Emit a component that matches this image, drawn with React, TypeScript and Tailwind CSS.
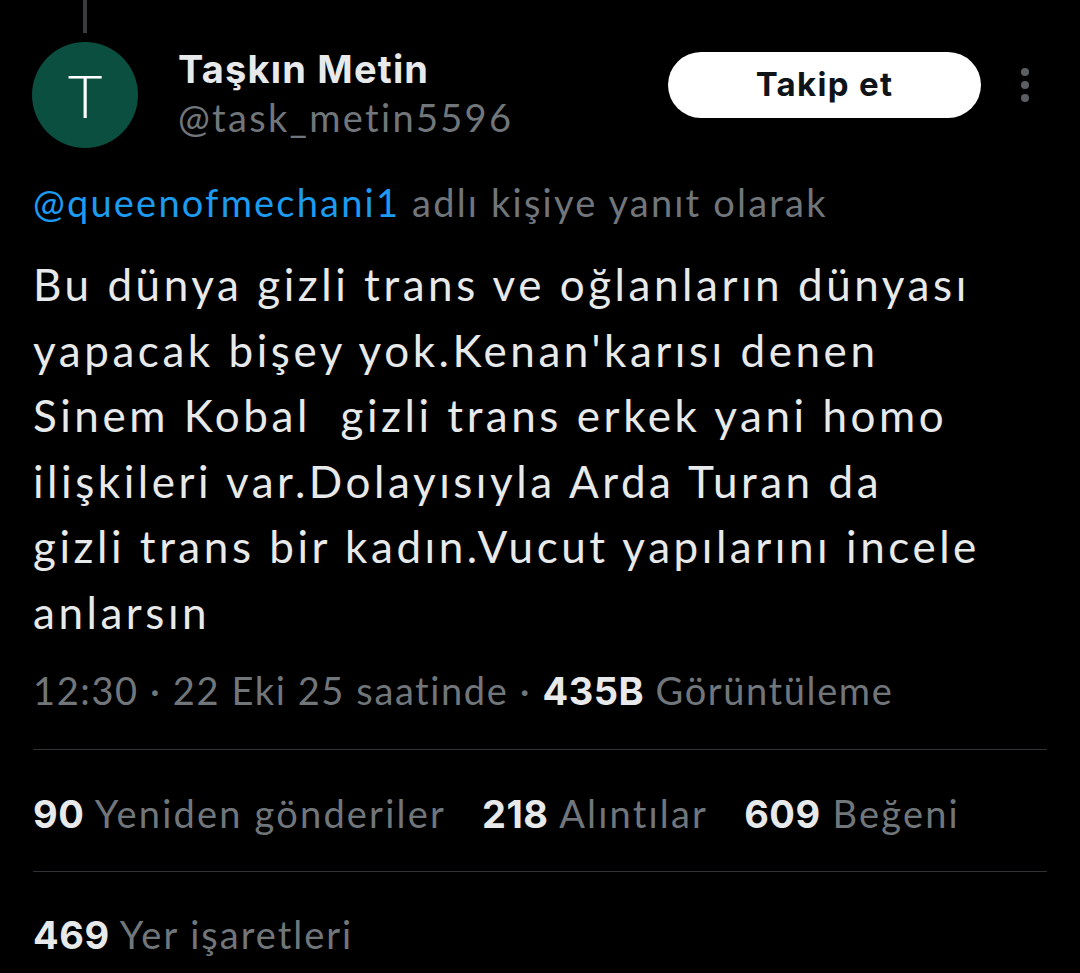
import React from "react";

const lines = [
  "Bu dünya gizli trans ve oğlanların dünyası",
  "yapacak bişey yok.Kenan'karısı denen",
  "Sinem Kobal\u00a0 gizli trans erkek yani homo",
  "ilişkileri var.Dolayısıyla Arda Turan da",
  "gizli trans bir kadın.Vucut yapılarını incele",
  "anlarsın",
];

const num = "font-['Inter',sans-serif] font-bold text-[#e7e9ea] tracking-[0.5px]";

export default function App() {
  return (
    <div className="min-h-[973px] w-[1080px] bg-black text-[#e7e9ea] font-['Lato','Liberation_Sans',sans-serif] overflow-hidden">
      {/* header */}
      <div className="flex items-start pl-[32px] pr-[51px]">
        <div className="flex flex-col items-center w-[106px]">
          <div className="w-[4px] h-[33px] bg-[#3a3d40]" />
          <div className="mt-[9px] w-[106px] h-[106px] rounded-full bg-[#0b4f40] flex items-center justify-center text-white text-[60px] font-light leading-none">
            T
          </div>
        </div>
        <div className="ml-[40px] mt-[43px] flex flex-col">
          <span className="font-['Inter',sans-serif] font-bold text-[38px] leading-[52px] tracking-[1.2px] text-[#e7e9ea]">Taşkın Metin</span>
          <span className="text-[38px] leading-[44px] tracking-[2.3px] text-[#71767b]">@task_metin5596</span>
        </div>
        <div className="ml-auto mt-[52px] flex items-center">
          <button className="w-[313px] h-[66px] rounded-full bg-white text-[#0f1419] font-['Inter',sans-serif] font-bold text-[33px] tracking-[1.3px]">
            Takip et
          </button>
          <div className="ml-[40px] flex flex-col gap-[5px]">
            <span className="w-[8px] h-[8px] rounded-full bg-[#5b5e62]" />
            <span className="w-[8px] h-[8px] rounded-full bg-[#5b5e62]" />
            <span className="w-[8px] h-[8px] rounded-full bg-[#5b5e62]" />
          </div>
        </div>
      </div>

      <div className="px-[33px]">
        {/* reply-to */}
        <div className="mt-[30px] text-[38px] leading-[48px] tracking-[2.2px] text-[#71767b]">
          <span className="text-[#1d9bf0]">@queenofmechani1</span> adlı kişiye yanıt olarak
        </div>

        {/* body */}
        <div className="mt-[26px] text-[44px] leading-[65.5px] tracking-[3.55px] text-[#e7e9ea]">
          {lines.map((l) => (
            <div key={l}>{l}</div>
          ))}
        </div>

        {/* meta */}
        <div className="mt-[20px] text-[38px] leading-[50px] tracking-[1.6px] text-[#71767b]">
          12:30 · 22 Eki 25 saatinde · <span className={num}>435B</span> Görüntüleme
        </div>

        <div className="mt-[33px] h-px bg-[#2f3336]" />

        <div className="h-[121px] pt-[6px] flex items-center gap-[36px] text-[38px] tracking-[2.2px] text-[#71767b]">
          <span>
            <b className={num}>90</b> Yeniden gönderiler
          </span>
          <span>
            <b className={num}>218</b> Alıntılar
          </span>
          <span>
            <b className={num}>609</b> Beğeni
          </span>
        </div>

        <div className="h-px bg-[#2f3336]" />

        <div className="h-[126px] flex items-center text-[38px] tracking-[2px] text-[#71767b]">
          <span>
            <b className={num}>469</b> Yer işaretleri
          </span>
        </div>
      </div>
    </div>
  );
}
